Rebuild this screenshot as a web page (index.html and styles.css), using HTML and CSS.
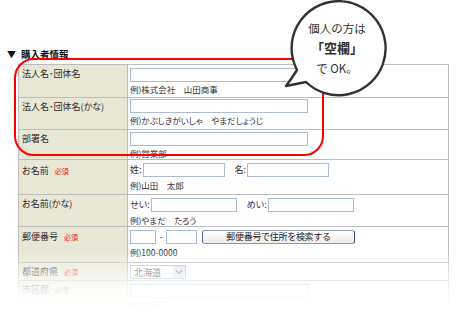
FILE: index.html
```html
<!DOCTYPE html>
<html>
	<head>
		<meta charset="UTF-8">
		<title>購入者情報</title>
		<link rel="stylesheet" href="styles.css">
	</head>
	<body>
		<div class="page">
			<h2 class="sec-title"><span class="mark">▼</span>購入者情報</h2>
			<table class="form">
				<colgroup>
					<col class="col-label">
					<col>
				</colgroup>
				<tr class="first">
					<th>法人名･団体名</th>
					<td>
						<input type="text" class="txt long">
						<div class="ex">例)株式会社　山田商事</div>
					</td>
				</tr>
				<tr class="tight-top">
					<th>法人名･団体名(かな)</th>
					<td>
						<input type="text" class="txt long">
						<div class="ex">例)かぶしきがいしゃ　やまだしょうじ</div>
					</td>
				</tr>
				<tr class="short">
					<th>部署名</th>
					<td>
						<input type="text" class="txt long">
						<div class="ex">例)営業部</div>
					</td>
				</tr>
				<tr>
					<th class="pad5">お名前<span class="req">必須</span></th>
					<td>
						<div class="pair">
							<span>姓:</span><input type="text" class="txt name">
							<span class="second">名:</span><input type="text" class="txt name">
						</div>
						<div class="ex">例)山田　太郎</div>
					</td>
				</tr>
				<tr class="short">
					<th>お名前(かな)</th>
					<td>
						<div class="pair">
							<span>せい:</span><input type="text" class="txt kana">
							<span class="second">めい:</span><input type="text" class="txt kana">
						</div>
						<div class="ex">例)やまだ　たろう</div>
					</td>
				</tr>
				<tr class="zip-row">
					<th class="pad4">郵便番号<span class="req">必須</span></th>
					<td>
						<div class="pair">
							<input type="text" class="txt zip1"><span class="dash">-</span><input type="text" class="txt zip2">
							<button type="button" class="btn-search">郵便番号で住所を検索する</button>
						</div>
						<div class="ex">例)100-0000</div>
					</td>
				</tr>
				<tr class="pref-row">
					<th>都道府県<span class="req">必須</span></th>
					<td>
						<div class="select">
							<span>北海道</span>
							<span class="arrow">
								<svg width="8" height="6" viewBox="0 0 8 6"><path d="M1 1.5 L4 4.5 L7 1.5" fill="none" stroke="#6d7f99" stroke-width="1.2"/></svg>
							</span>
						</div>
					</td>
				</tr>
				<tr class="last">
					<th>市区郡<span class="req">必須</span></th>
					<td>
						<input type="text" class="txt long">
						<div class="ex">例)新宿区</div>
					</td>
				</tr>
			</table>

			<!-- 赤枠 -->
			<div class="highlight"></div>

			<!-- 吹き出し -->
			<svg class="bubble" width="110" height="100" viewBox="0 0 110 100">
				<path d="M26 82 A47 47 0 1 0 17 70 Q12 78 6 86 Q16 84 26 82 Z" fill="#fff" stroke="#333" stroke-width="2.4" stroke-linejoin="round"/>
				<text x="57" y="33" class="b-small">個人の方は</text>
				<text x="57" y="53" class="b-big">「空欄」</text>
				<text x="57" y="73" class="b-small">で OK。</text>
			</svg>

			<div class="fade"></div>
		</div>
	</body>
</html>
```

FILE: styles.css
```css
*{
	padding: 0;
	margin: 0;
}
body{
	background: #fff;
	font-family: "Noto Sans CJK JP", "DejaVu Sans", sans-serif;
	font-size: 9px;
	color: #333;
}
.page{
	position: relative;
	width: 460px;
	height: 330px;
	overflow: hidden;
	padding-top: 48px;
	box-sizing: border-box;
}
.sec-title{
	margin: 0 0 3px 7px;
	font-size: 9.5px;
	line-height: 12px;
	font-weight: bold;
	color: #111;
}
.sec-title .mark{
	font-size: 9px;
	margin-right: 5px;
}

/* フォーム表 */
.form{
	margin-left: 18px;
	width: 431px;
	border-collapse: collapse;
	table-layout: fixed;
	font-feature-settings: "palt";
}
.col-label{
	width: 109px;
}
.form th,
.form td{
	border: 1px solid #bdbdbd;
	vertical-align: top;
	text-align: left;
}
.form th{
	background: #e8e6d5;
	font-weight: normal;
	line-height: 12px;
	padding: 3px 3px 0;
	color: #2b2b2b;
}
.form th.pad5{
	padding-top: 5px;
}
.form th.pad4{
	padding-top: 4px;
}
.form td{
	padding: 2px 2px 3px;
}
.form tr.first td{
	padding-top: 3px;
	padding-bottom: 2px;
}
.form tr.tight-top td{
	padding-top: 1px;
}
.form tr.short td{
	padding-bottom: 0;
}
.form tr.zip-row td{
	padding-bottom: 4px;
}
.form tr.pref-row td{
	padding: 2px 2px 1px;
}
.form tr.last td{
	padding-top: 3px;
}
.req{
	color: #e62020;
	font-size: 7px;
	margin-left: 6px;
}
.txt{
	display: block;
	height: 14px;
	border: 1px solid #a9bcd0;
	background: #fff;
	box-sizing: border-box;
	font-size: 9px;
}
.txt.long{
	width: 178px;
}
.ex{
	font-size: 8.5px;
	line-height: 12px;
	margin-top: 1px;
	color: #333;
}
.pair{
	display: flex;
	align-items: center;
	height: 16px;
}
.pair span{
	line-height: 16px;
	font-size: 9px;
}
.pair .second{
	margin-left: 10px;
}
.txt.name{
	width: 82px;
	margin-left: 1px;
}
.txt.kana{
	width: 86px;
	margin-left: 1px;
}
.txt.zip1{
	width: 26px;
}
.txt.zip2{
	width: 31px;
}
.dash{
	width: 10px;
	text-align: center;
}
.btn-search{
	margin-left: 5px;
	width: 153px;
	height: 14px;
	border: 1px solid #8e9bb0;
	border-left-color: #52698c;
	border-right-color: #2f4d7c;
	border-radius: 3px;
	background: linear-gradient(#ffffff, #ecebe6);
	font-family: inherit;
	font-size: 9px;
	line-height: 12px;
	color: #222;
	letter-spacing: -0.3px;
}
.select{
	display: flex;
	align-items: center;
	justify-content: space-between;
	width: 56px;
	height: 14px;
	border: 1px solid #a9bcd0;
	box-sizing: border-box;
	padding-left: 3px;
	font-size: 9px;
}
.select .arrow{
	display: flex;
	align-items: center;
	justify-content: center;
	width: 12px;
	height: 12px;
	background: #dde6f4;
}

/* 赤枠 */
.highlight{
	position: absolute;
	left: 14px;
	top: 58px;
	width: 306px;
	height: 94px;
	border: 2px solid #f00;
	border-radius: 20px;
}

/* 吹き出し */
.bubble{
	position: absolute;
	left: 280px;
	top: 0;
}
.bubble text{
	font-family: "Noto Sans CJK JP", sans-serif;
	text-anchor: middle;
	fill: #333;
}
.b-small{
	font-size: 11.5px;
}
.b-big{
	font-size: 13px;
	font-weight: bold;
}

.fade{
	position: absolute;
	left: 0;
	right: 0;
	top: 250px;
	height: 80px;
	background: linear-gradient(rgba(255,255,255,0) 0, rgba(255,255,255,0.5) 20px, rgba(255,255,255,0.86) 40px, #fff 58px);
}
```
